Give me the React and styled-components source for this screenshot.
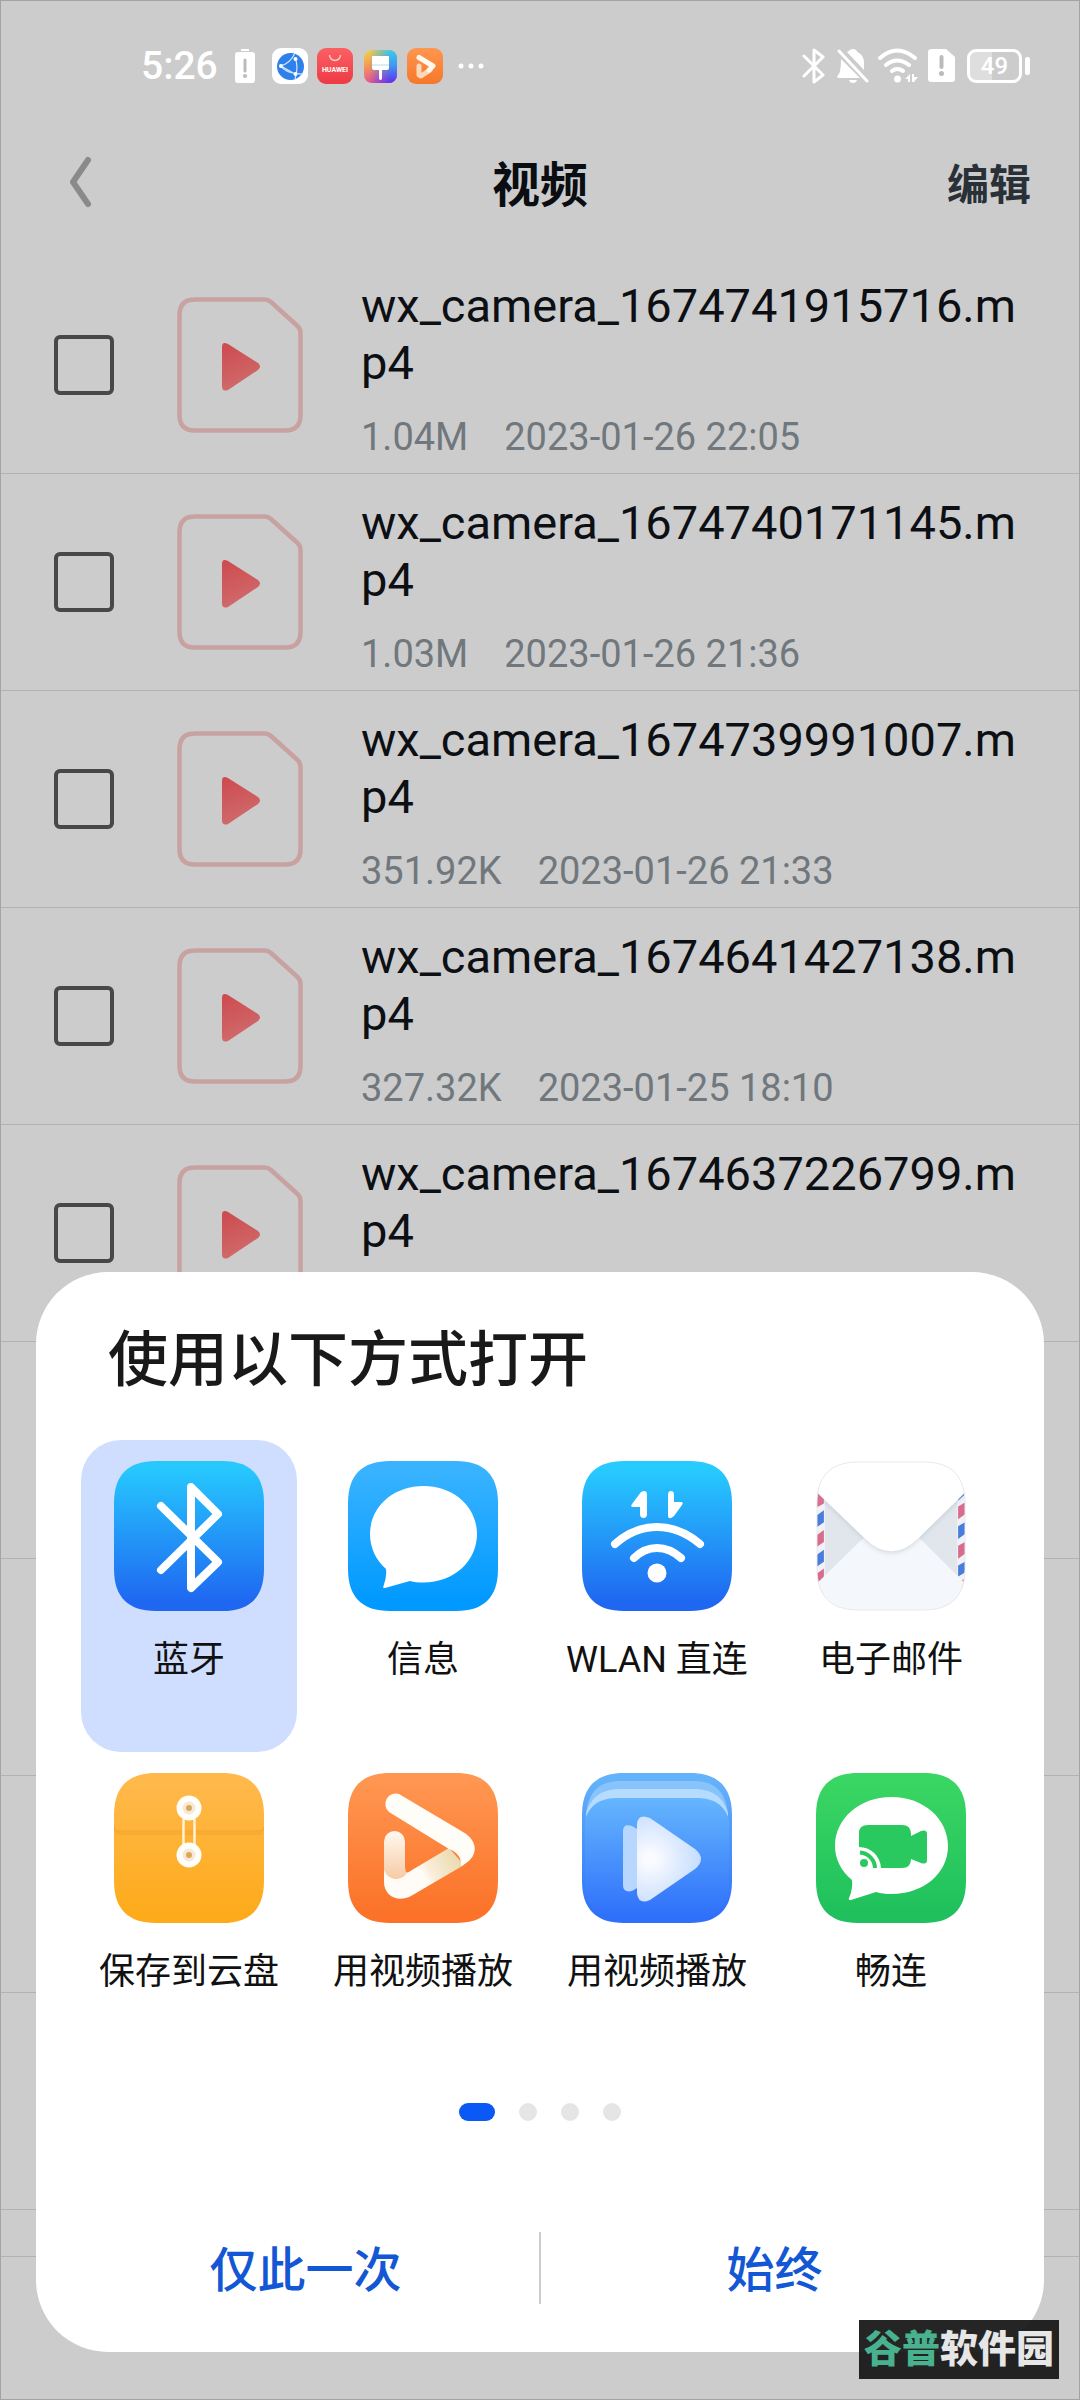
import React from "react";
import styled, { createGlobalStyle, css } from "styled-components";

const GlobalStyle = createGlobalStyle`
  *, *::before, *::after { box-sizing: border-box; }
  body { margin: 0; background: #ccc; font-family: Roboto, "Noto Sans CJK SC", sans-serif; }
  h1, h2, p, ul { margin: 0; padding: 0; }
  ul { list-style: none; }
  button { border: 0; padding: 0; background: none; font: inherit; color: inherit; cursor: pointer; }
  svg { display: block; flex: none; }
`;

const Page = styled.div`
  position: relative;
  display: flex;
  flex-direction: column;
  min-height: 100vh;
  background: #ccc;
  border: 1px solid #a3a3a3;
`;

const StatusBar = styled.div`
  display: flex;
  justify-content: space-between;
  align-items: center;
  height: 130px;
  padding: 0 49px 0 140px;
  color: #fff;
`;

const StatusGroup = styled.div`
  display: flex;
  align-items: center;
  gap: 9px;
`;

const Clock = styled.span`
  font-size: 39px;
  line-height: 48px;
  font-weight: 500;
`;

const BatteryCase = styled.span`
  width: 55px;
  height: 34px;
  border: 3px solid #fff;
  border-radius: 9px;
  font-size: 24px;
  line-height: 28px;
  font-weight: 500;
  text-align: center;
  background: linear-gradient(90deg, #dedede 45%, transparent 45%);
`;

const Battery = styled.span`
  display: flex;
  align-items: center;
  gap: 3px;
  &::after {
    content: "";
    width: 5px;
    height: 18px;
    border-radius: 2px;
    background: #fff;
  }
`;

const Header = styled.header`
  display: grid;
  grid-template-columns: 1fr auto 1fr;
  align-items: center;
  height: 110px;
  padding: 0 48px 0 67px;
  margin-bottom: 16px;
`;

const BackButton = styled.button`
  justify-self: start;
`;

const PageTitle = styled.h1`
  font-size: 48px;
  line-height: 72px;
  font-weight: 700;
  color: #0a0d12;
  margin-right: 19px;
`;

const EditButton = styled.button`
  justify-self: end;
  font-size: 42px;
  line-height: 60px;
  font-weight: 700;
  color: #2a3038;
`;

const FileRow = styled.li`
  display: flex;
  align-items: center;
  height: 217px;
  padding: 0 40px 0 53px;
  border-bottom: 1px solid #b2b2b2;
`;

const FileLabel = styled.label`
  display: flex;
  align-items: center;
  flex: 1;
  height: 100%;
`;

const Checkbox = styled.input`
  appearance: none;
  flex: none;
  width: 60px;
  height: 60px;
  margin: 0 63px 0 0;
  border: 4px solid #484848;
  border-radius: 6px;
  &:checked { background: #484848; }
`;

const FileText = styled.span`
  flex: 1;
  align-self: flex-start;
  padding-top: 20px;
  margin-left: 58px;
`;

const FileName = styled.span`
  display: block;
  font-size: 47px;
  line-height: 57px;
  color: #0c0f13;
  word-break: break-all;
`;

const FileMeta = styled.span`
  display: flex;
  gap: 36px;
  margin-top: 24px;
  font-size: 38px;
  line-height: 45px;
  color: #70777d;
`;

const Toolbar = styled.footer`
  flex: 1;
  margin-top: 46px;
  min-height: 142px;
  border-top: 1px solid #b2b2b2;
`;

const Overlay = styled.div`
  position: absolute;
  inset: 0;
  display: flex;
  align-items: flex-end;
  padding: 0 35px 47px;
`;

const Sheet = styled.section`
  flex: 1;
  padding: 44px 45px 48px;
  border-radius: 72px;
  background: #fff;
`;

const SheetTitle = styled.h2`
  padding-left: 27px;
  font-size: 60px;
  line-height: 90px;
  font-weight: 500;
  color: #191919;
`;

const AppGrid = styled.ul`
  display: grid;
  grid-template-columns: repeat(4, 1fr);
  column-gap: 18px;
  margin-top: 34px;
`;

const AppTile = styled.button`
  display: flex;
  flex-direction: column;
  align-items: center;
  gap: 25px;
  width: 100%;
  height: 312px;
  padding-top: 21px;
  border-radius: 40px;
  font-size: 36px;
  line-height: 48px;
  color: #111;
  white-space: nowrap;
  ${(p) => p.$selected && css`background: #cfdefe;`}
`;

const Pager = styled.div`
  display: flex;
  justify-content: center;
  gap: 24px;
  margin-top: 39px;
`;

const PagerDot = styled.button`
  && {
    width: ${(p) => (p.$active ? 36 : 18)}px;
    height: 18px;
    border-radius: 9px;
    background: ${(p) => (p.$active ? "#0a59f7" : "#e5e5e5")};
  }
`;

const Actions = styled.div`
  display: flex;
  align-items: center;
  margin: 111px -9px 0;
`;

const ActionButton = styled.button`
  flex: 1;
  padding-top: 6px;
  font-size: 48px;
  line-height: 66px;
  font-weight: 500;
  color: #1357d4;
  & + & { border-left: 2px solid #ccc; }
`;

const Watermark = styled.div`
  position: absolute;
  right: 20px;
  bottom: 20px;
  width: 200px;
  height: 59px;
  background: rgba(20, 20, 20, 0.93);
  color: #e6e6e6;
  font-size: 38px;
  line-height: 58px;
  font-weight: 900;
  font-style: oblique 6deg;
  text-align: center;
  white-space: nowrap;
`;

const WatermarkAccent = styled.span`
  color: #48b18e;
`;

const SQUIRCLE =
  "M42 0H108C136 0 150 14 150 42V108C150 136 136 150 108 150H42C14 150 0 136 0 108V42C0 14 14 0 42 0Z";

function IconBase({ id, from, to, children }) {
  return (
    <svg width="150" height="150" viewBox="0 0 150 150" aria-hidden="true">
      <defs>
        <linearGradient id={id} x1="0" y1="0" x2="0" y2="1">
          <stop offset="0.05" stopColor={from} />
          <stop offset="0.95" stopColor={to} />
        </linearGradient>
      </defs>
      <path d={SQUIRCLE} fill={`url(#${id})`} />
      {children}
    </svg>
  );
}

const BluetoothApp = () => (
  <IconBase id="bt" from="#26c8fe" to="#1f66f1">
    <path d="M47 45L104 101L77 127V26L104 53L47 109" fill="none" stroke="#fff" strokeWidth="8" strokeLinecap="round" strokeLinejoin="round" />
  </IconBase>
);

const MessageApp = () => (
  <IconBase id="msg" from="#39b3ff" to="#0099ff">
    <path d="M75.500 25C106 25 129 46 129 73S106 121.500 75.500 121.500C70 121.500 66 121 62 120L37 127Q34.500 127.500 35.500 125Q39 116 38 108C28 99 22 87 22 73C22 46 45 25 75.500 25Z" fill="#fff" />
  </IconBase>
);

const WlanApp = () => (
  <IconBase id="wlan" from="#27cbff" to="#1f66f1">
    <g fill="#fff">
      <path d="M59 31Q65 28 65 34V53Q65 57 61.500 57T58 53V46H51Q48 46 50 43Z" />
      <path d="M86 34Q86 30 89 30T92 34V41H99Q102 41 100 44L92 55Q86 60 86 54Z" />
      <circle cx="75" cy="112" r="9.500" />
    </g>
    <path d="M33 83Q52 66 75 66T118 83M52 97Q62 87 75 87T99 97" fill="none" stroke="#fff" strokeWidth="8" strokeLinecap="round" />
  </IconBase>
);

const MailApp = () => (
  <svg width="150" height="150" viewBox="-1 -1 152 152" aria-hidden="true">
    <defs>
      <clipPath id="mailClip"><path d={SQUIRCLE} /></clipPath>
      <filter id="mailShadow" x="-10%" y="-10%" width="120%" height="130%">
        <feDropShadow dx="0" dy="2" stdDeviation="2" floodColor="#9aa6b4" floodOpacity="0.35" />
      </filter>
    </defs>
    <g clipPath="url(#mailClip)">
      <rect width="150" height="150" fill="#e0e6ec" />
      <rect width="8" height="150" fill="#f0f2f8" />
      <rect x="142" width="8" height="150" fill="#f0f2f8" />
      <g fill="#d96c8d">
        <path d="M0 30L7 34V42L0 46ZM0 74L7 69V81L0 86ZM0 113L7 108V120L0 125Z" />
        <path d="M143 45L150 41V53L143 58ZM143 85L150 81V93L143 98ZM143 122L150 118V128H143Z" />
      </g>
      <g fill="#4a7cdc">
        <path d="M0 54L7 49V61L0 66ZM0 94L7 89V101L0 106Z" />
        <path d="M143 36L150 29V33L143 39ZM143 65L150 61V73L143 78ZM143 105L150 101V112L143 116Z" />
      </g>
      <path d="M0 123L48 76H103L150 123V150H0Z" fill="#f4f7fb" />
      <path d="M-6 -6H156V25L103 77Q75 104 48 77L-6 25Z" fill="#fff" filter="url(#mailShadow)" />
    </g>
    <path d={SQUIRCLE} fill="none" stroke="#e9e9ec" />
  </svg>
);

const CloudApp = () => (
  <IconBase id="cloud" from="#ffb94b" to="#fdab1b">
    <path d="M0 55Q0 59 5 59H145Q150 59 150 55V57Q150 62 145 62H5Q0 62 0 57Z" fill="#f0982a" opacity="0.3" />
    <path d="M0 54Q0 58 5 58H145Q150 58 150 54" fill="none" stroke="#f4a02c" strokeWidth="1" />
    <path d="M69.500 46V72M80.500 46V72" stroke="#fff3d6" strokeWidth="2.500" />
    {[35, 82].map((cy) => (
      <g key={cy}>
        <circle cx="75" cy={cy} r="12.500" fill="#fffefa" />
        <circle cx="75" cy={cy} r="6.500" fill="#f5ead6" />
        <circle cx="75" cy={cy} r="3" fill="#dba85a" />
      </g>
    ))}
  </IconBase>
);

const HuaweiVideoApp = () => (
  <IconBase id="hvideo" from="#ff9651" to="#fb7228">
    <defs>
      <linearGradient id="legA" x1="0" y1="57" x2="0" y2="106" gradientUnits="userSpaceOnUse">
        <stop offset="0" stopColor="#fffaf2" />
        <stop offset="1" stopColor="#f6cba6" />
      </linearGradient>
      <linearGradient id="legB" x1="112" y1="84" x2="68" y2="110" gradientUnits="userSpaceOnUse">
        <stop offset="0" stopColor="#ead8ac" />
        <stop offset="0.65" stopColor="#f9eedb" />
        <stop offset="0.8" stopColor="#fffcf7" />
      </linearGradient>
    </defs>
    <path d="M36 96V109C36 123 50 130 63 123L116 92L101 75L64 97Q59 101 57 99V96Z" fill="url(#legB)" />
    <path d="M36 68.500A10.500 10.500 0 0 1 57 68.500V94Q57 98 59 100Q55 106 47 106Q39 105 36 97Z" fill="url(#legA)" />
    <path d="M51 21L115 59C131 68 131 85 113 93Q114 81 101 76L41 39A10.500 10.500 0 0 1 51 21Z" fill="#fffdf8" />
  </IconBase>
);

const BlueVideoApp = () => (
  <IconBase id="bvideo" from="#64b2f9" to="#2f70fa">
    <defs>
      <linearGradient id="front" x1="0" y1="25" x2="0" y2="150" gradientUnits="userSpaceOnUse">
        <stop offset="0" stopColor="#65b6fe" />
        <stop offset="0.95" stopColor="#2f70fa" />
      </linearGradient>
      <radialGradient id="play" cx="68" cy="86" r="52" gradientUnits="userSpaceOnUse">
        <stop offset="0.1" stopColor="#fafbff" />
        <stop offset="1" stopColor="#c4dcfe" />
      </radialGradient>
    </defs>
    <path d="M4 40C7 16 20 8 38 8H112C130 8 143 16 146 40V60H4Z" fill="#88c3fb" />
    <path d="M4 41C9 22 22 16 38 16H112C128 16 141 22 146 41V60H4Z" fill="#b5dbfe" />
    <path d="M3 46C9 30 20 25 36 25H114C130 25 141 30 147 46V108C147 134 134 148 108 148H42C16 148 3 134 3 108Z" fill="url(#front)" />
    <path d="M41 58Q41 50 50 53L62 60V111L50 118Q41 120 41 112Z" fill="#b8d7fe" />
    <path d="M55 51Q56 40 68 45L113 76Q125 86 113 96L68 127Q57 132 55 121Z" fill="url(#play)" />
  </IconBase>
);

const MeetimeApp = () => (
  <IconBase id="meet" from="#3ad663" to="#1fc05d">
    <path d="M75.500 24C108 24 132 46 132 73S108 121 75.500 121C69 121 65 120.500 60 119L35 127Q32 127.500 33 125Q37 116 36 107C25 98 19 86 19 73C19 46 43 24 75.500 24Z" fill="#fff" />
    <g fill="#29c960">
      <path d="M52 52H86Q95 52 95 61V63L105 58Q111 56 111 61V87Q111 92 105 90L95 86Q95 95 86 95H65A22 22 0 0 0 43 74V60Q43 52 52 52Z" />
      <circle cx="48" cy="90" r="4" />
    </g>
    <path d="M44 79.500A16 16 0 0 1 59 95" fill="none" stroke="#29c960" strokeWidth="4" />
  </IconBase>
);

const FileIcon = () => (
  <svg width="126" height="136" viewBox="0 0 126 136" aria-hidden="true">
    <defs>
      <linearGradient id="redPlay" x1="0" y1="0" x2="0.300" y2="1">
        <stop offset="0" stopColor="#cd4a4e" />
        <stop offset="1" stopColor="#d06a6b" />
      </linearGradient>
    </defs>
    <path d="M17 2.500H88Q91 2.500 94 5L120 28.500Q123.500 31.500 123.500 36V118Q123.500 133.500 108 133.500H18Q2.500 133.500 2.500 118V18Q2.500 2.500 18 2.500Z" fill="none" stroke="#c8a1a1" strokeWidth="4.500" />
    <path d="M45 50Q45 44 51 47L81 66Q85 69.500 81 73L51 93Q45 95 45 89Z" fill="url(#redPlay)" />
  </svg>
);

const BatteryAlert = () => (
  <svg width="36" height="36" viewBox="0 0 36 36" aria-hidden="true">
    <path d="M14 1H22V3H14ZM11 4H25Q28 4 28 7V32Q28 35 25 35H11Q8 35 8 32V7Q8 4 11 4Z" fill="#fff" />
    <path d="M18 12V23" stroke="#bbb" strokeWidth="3" strokeLinecap="round" />
    <circle cx="18" cy="28" r="2" fill="#bbb" />
  </svg>
);

const BrowserBadge = () => (
  <svg width="36" height="36" viewBox="0 0 36 36" aria-hidden="true">
    <rect width="36" height="36" rx="9" fill="#fff" />
    <circle cx="18.500" cy="18.500" r="13.500" fill="#2f80ea" />
    <path d="M8 18Q18 16 23 5M9 18Q14 26 31 26M23 10Q27 18 23 31M9 18L23 26" fill="none" stroke="#d4e6ff" strokeWidth="1.200" />
    <g fill="#fff"><circle cx="9" cy="18" r="2" /><circle cx="23.500" cy="11" r="2" /><circle cx="23.500" cy="26" r="2" /></g>
  </svg>
);

const StoreBadge = () => (
  <svg width="36" height="36" viewBox="0 0 36 36" aria-hidden="true">
    <defs>
      <linearGradient id="store" x1="0" y1="0" x2="0" y2="1"><stop stopColor="#fb6064" /><stop offset="1" stopColor="#ee3a45" /></linearGradient>
    </defs>
    <rect width="36" height="36" rx="9" fill="url(#store)" />
    <path d="M12.500 7A5.500 5.500 0 0 0 23.500 7" fill="none" stroke="#ffc9c9" strokeWidth="1.500" />
    <text x="18" y="24" textAnchor="middle" fontSize="7" fontWeight="700" fill="#fff">HUAWEI</text>
  </svg>
);

const ThemeBadge = () => (
  <svg width="36" height="36" viewBox="0 0 36 36" aria-hidden="true">
    <defs>
      <linearGradient id="theme" x1="0" y1="0" x2="0.300" y2="1">
        <stop stopColor="#ecd94a" /><stop offset="0.450" stopColor="#f59a55" /><stop offset="1" stopColor="#e0509a" />
      </linearGradient>
      <linearGradient id="themeCool" x1="0" y1="0" x2="0" y2="1">
        <stop stopColor="#35cdec" /><stop offset="0.450" stopColor="#3f9bf0" /><stop offset="1" stopColor="#5a2ff0" />
      </linearGradient>
      <linearGradient id="themeFade" x1="0" y1="0" x2="1" y2="0">
        <stop offset="0.200" stopColor="#000" /><stop offset="0.800" stopColor="#fff" />
      </linearGradient>
      <mask id="themeMask"><rect width="36" height="36" fill="url(#themeFade)" /></mask>
    </defs>
    <rect x="2" y="2" width="33" height="33" rx="8" fill="url(#theme)" />
    <rect x="2" y="2" width="33" height="33" rx="8" fill="url(#themeCool)" mask="url(#themeMask)" />
    <path d="M10 8H27V20Q27 22 25 22H20V30Q20 32 18.500 32T17 30V22H12Q10 22 10 20Z" fill="#fff" />
    <path d="M10 17H27" stroke="#b8dcea" />
  </svg>
);

const VideoBadge = () => (
  <svg width="36" height="36" viewBox="0 0 36 36" aria-hidden="true">
    <defs>
      <linearGradient id="vbadge" x1="0" y1="0" x2="0" y2="1"><stop stopColor="#ff964f" /><stop offset="1" stopColor="#f5782a" /></linearGradient>
    </defs>
    <rect width="36" height="36" rx="9" fill="url(#vbadge)" />
    <path d="M12 18V27L14 28L23 22" fill="none" stroke="#fbd9b8" strokeWidth="5" strokeLinecap="round" strokeLinejoin="round" />
    <path d="M12 9.500L26 18L22 22" fill="none" stroke="#fff8ee" strokeWidth="5" strokeLinecap="round" strokeLinejoin="round" />
  </svg>
);

const MoreDots = () => (
  <svg width="36" height="36" viewBox="0 0 36 36" aria-hidden="true">
    <g fill="#fff"><circle cx="9" cy="18" r="2.500" /><circle cx="19" cy="18" r="2.500" /><circle cx="29" cy="18" r="2.500" /></g>
  </svg>
);

const BluetoothStatus = () => (
  <svg width="28" height="36" viewBox="0 0 28 36" aria-hidden="true">
    <path d="M4 8L23 27L14 34V2L23 9L4 28" fill="none" stroke="#fff" strokeWidth="3" strokeLinecap="round" strokeLinejoin="round" />
  </svg>
);

const MutedBell = () => (
  <svg width="32" height="36" viewBox="0 0 32 36" aria-hidden="true">
    <path d="M10 4Q12 3 13 2Q16 0 19 2Q20 4 22 5Q27 8 27 15V22ZM4 11L23 30H1Q-1 28 2 26Q4 22 4 11ZM12 32H20Q19 35 16 35T12 32Z" fill="#fff" />
    <path d="M2 3L30 33" stroke="#fff" strokeWidth="3" strokeLinecap="round" />
  </svg>
);

const WifiStatus = () => (
  <svg width="41" height="36" viewBox="0 0 41 36" aria-hidden="true">
    <path d="M2 10Q19 -5 37 10M8 17Q19 8 31 17M14 23Q19 19 25 23" fill="none" stroke="#fff" strokeWidth="4" strokeLinecap="round" />
    <circle cx="19.500" cy="31" r="3.500" fill="#fff" />
    <path d="M32 26V34H30V31H27ZM34 26H36V29H40L36 34H34Z" fill="#fff" />
  </svg>
);

const SimAlert = () => (
  <svg width="30" height="36" viewBox="0 0 30 36" aria-hidden="true">
    <path d="M4 1H18L27 9V31Q27 34 24 34H3Q0 34 0 31V4Q0 1 4 1Z" fill="#fff" />
    <path d="M13.500 9V19" stroke="#bbb" strokeWidth="4" strokeLinecap="round" />
    <circle cx="13.500" cy="25.500" r="2.500" fill="#bbb" />
  </svg>
);

const FILES = [
  { name: "wx_camera_1674741915716.mp4", size: "1.04M", date: "2023-01-26 22:05" },
  { name: "wx_camera_1674740171145.mp4", size: "1.03M", date: "2023-01-26 21:36" },
  { name: "wx_camera_1674739991007.mp4", size: "351.92K", date: "2023-01-26 21:33" },
  { name: "wx_camera_1674641427138.mp4", size: "327.32K", date: "2023-01-25 18:10" },
  { name: "wx_camera_1674637226799.mp4" },
];

const EMPTY_ROWS = ["a", "b", "c", "d"];

const APPS = [
  { label: "蓝牙", Icon: BluetoothApp },
  { label: "信息", Icon: MessageApp },
  { label: "WLAN 直连", Icon: WlanApp },
  { label: "电子邮件", Icon: MailApp },
  { label: "保存到云盘", Icon: CloudApp },
  { label: "用视频播放", Icon: HuaweiVideoApp },
  { label: "用视频播放", Icon: BlueVideoApp },
  { label: "畅连", Icon: MeetimeApp },
];

export default function App() {
  const [selected, setSelected] = React.useState(0);
  const [page, setPage] = React.useState(0);
  return (
    <>
      <GlobalStyle />
      <Page>
        <StatusBar>
          <StatusGroup>
            <Clock>5:26</Clock>
            <BatteryAlert />
            <BrowserBadge />
            <StoreBadge />
            <ThemeBadge />
            <VideoBadge />
            <MoreDots />
          </StatusGroup>
          <StatusGroup>
            <BluetoothStatus />
            <MutedBell />
            <WifiStatus />
            <SimAlert />
            <Battery><BatteryCase>49</BatteryCase></Battery>
          </StatusGroup>
        </StatusBar>

        <Header>
          <BackButton aria-label="返回">
            <svg width="24" height="60" viewBox="0 0 24 60" aria-hidden="true">
              <path d="M20 4L5 26L20 48" fill="none" stroke="#8a8a8a" strokeWidth="6" strokeLinecap="round" strokeLinejoin="round" />
            </svg>
          </BackButton>
          <PageTitle>视频</PageTitle>
          <EditButton>编辑</EditButton>
        </Header>

        <ul>
          {FILES.map((file) => (
            <FileRow key={file.name}>
              <FileLabel>
                <Checkbox type="checkbox" />
                <FileIcon />
                <FileText>
                  <FileName>{file.name}</FileName>
                  {file.size && (
                    <FileMeta>
                      <span>{file.size}</span>
                      <span>{file.date}</span>
                    </FileMeta>
                  )}
                </FileText>
              </FileLabel>
            </FileRow>
          ))}
          {EMPTY_ROWS.map((key) => <FileRow key={key} />)}
        </ul>
        <Toolbar />

        <Overlay>
          <Sheet role="dialog" aria-labelledby="sheet-title">
            <SheetTitle id="sheet-title">使用以下方式打开</SheetTitle>
            <AppGrid>
              {APPS.map(({ label, Icon }, i) => (
                <li key={i}>
                  <AppTile $selected={i === selected} onClick={() => setSelected(i)}>
                    <Icon />
                    {label}
                  </AppTile>
                </li>
              ))}
            </AppGrid>
            <Pager>
              {[0, 1, 2, 3].map((n) => (
                <PagerDot key={n} $active={n === page} aria-label={`第 ${n + 1} 页`} onClick={() => setPage(n)} />
              ))}
            </Pager>
            <Actions>
              <ActionButton>仅此一次</ActionButton>
              <ActionButton>始终</ActionButton>
            </Actions>
          </Sheet>
        </Overlay>

        <Watermark><WatermarkAccent>谷普</WatermarkAccent>软件园</Watermark>
      </Page>
    </>
  );
}
